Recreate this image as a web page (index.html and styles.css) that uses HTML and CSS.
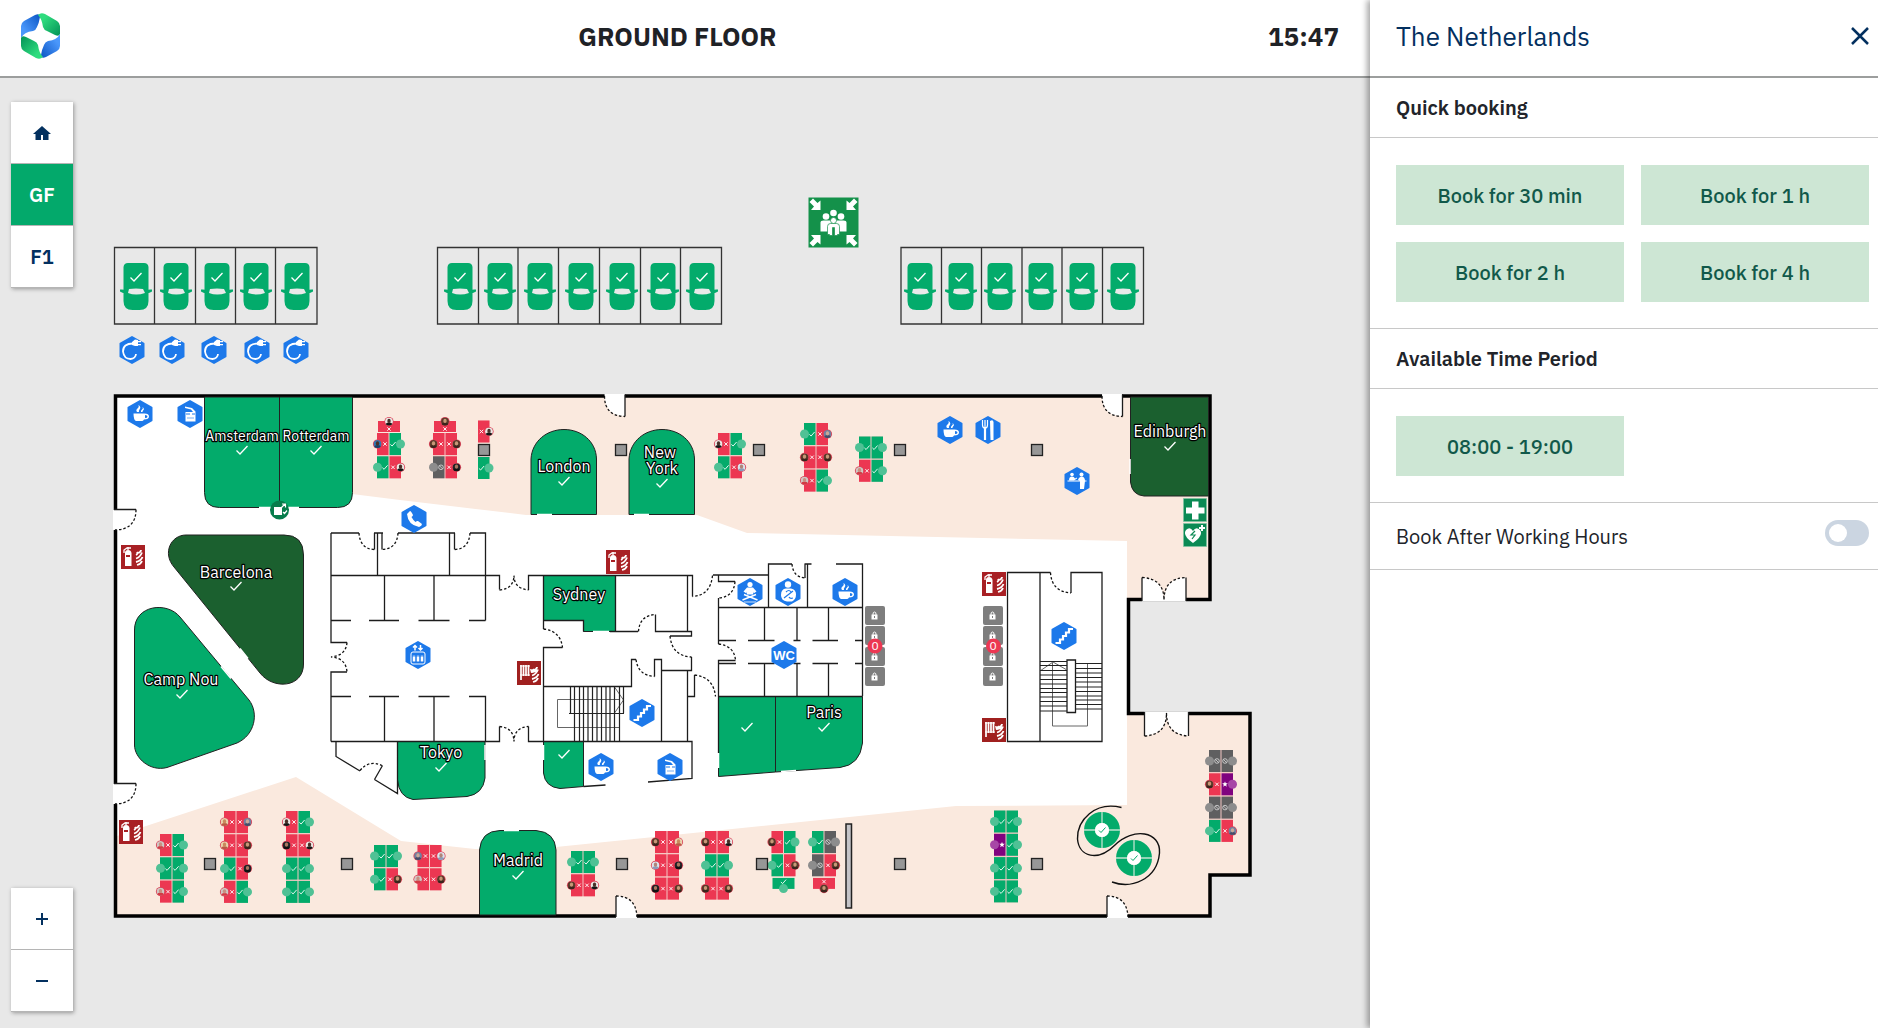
FILE: index.html
```html
<!DOCTYPE html>
<html lang="en">
<head>
<meta charset="utf-8">
<meta name="viewport" content="width=device-width, initial-scale=1">
<title>Ground floor</title>
<link rel="stylesheet" href="styles.css">
</head>
<body>
<div class="app">
<main class="floor">
  <header class="bar">
    <a class="logo" href="#" aria-label="Start">
      <svg viewBox="0 0 50 50" width="50" height="50" aria-hidden="true">
        <defs>
          <linearGradient id="lg" x1="0" y1="0" x2="1" y2="1"><stop offset=".25" stop-color="#2fdc7e"/><stop offset="1" stop-color="#029257"/></linearGradient>
          <linearGradient id="lg2" x1="1" y1="1" x2="0" y2="0"><stop offset=".25" stop-color="#2fdc7e"/><stop offset="1" stop-color="#029257"/></linearGradient>
          <linearGradient id="lb" x1="0" y1="1" x2="1" y2="0"><stop offset=".25" stop-color="#4a97fb"/><stop offset="1" stop-color="#0b55c4"/></linearGradient>
          <linearGradient id="lb2" x1="1" y1="0" x2="0" y2="1"><stop offset=".25" stop-color="#4a97fb"/><stop offset="1" stop-color="#0b55c4"/></linearGradient>
        </defs>
        <path fill="url(#lb)" d="M5 27V15q0-3 3-5l11-6q5-2 5 2-1 6-3 10-1 3-4 4Q8 21 5 27Z"/>
        <path fill="url(#lg)" d="M22 4q3-3 7-1l12 7q3 2 3 5v8q-1 3-5 1l-8-4q-3-1-4-4-1-8-5-12Z"/>
        <path fill="url(#lb2)" d="M44 23v12q0 3-3 5l-11 6q-5 2-5-2 1-6 3-10 1-3 4-4 9-1 12-7Z"/>
        <path fill="url(#lg2)" d="M27 46q-3 3-7 1L8 40q-3-2-3-5v-8q1-3 5-1l8 4q3 1 4 4 1 8 5 12Z"/>
      </svg>
    </a>
    <h1 class="floor-name">GROUND FLOOR</h1>
    <time class="clock">15:47</time>
  </header>

  <div class="canvas">
    <svg class="map" viewBox="0 78 1370 950" role="img" aria-label="Ground floor map">
      <defs>
        <path id="tick" d="M-5.5.5l3.5 3.5 7.500-8" fill="none" stroke="#fff" stroke-width="1.300"/>
        <g id="car">
          <path fill="#03ab6b" d="M-8 0H8q4 0 4.500 4V38q0 9-9 9h-7q-9 0-9-9V4Q-12-0-8 0ZM-16 26.500q4-.5 5 1h22q1-1.500 5-1v2l-4 2h-24l-4-2Z"/>
          <path fill="#e9e9e9" d="M-7 26q7-1 14 0l2 4q-9 3-17 0Z"/>
          <use href="#tick" y="14"/>
        </g>
        <path id="hex" fill="#1d79ea" stroke="#1d79ea" stroke-width="2" stroke-linejoin="round" d="M0-13L11.500-6.500V6.500L0 13-11.500 6.500V-6.500Z"/>
        <g id="charger"><use href="#hex"/><path d="M1-6.500Q-9-6.500-9 1.500q1 7.500 7.500 7.500Q3.500 8.500 4 4" fill="none" stroke="#fff" stroke-width="1.800"/><path fill="#fff" d="M0-8l3-2.500 3 .5v1h3v1.300H6v1.700h3v1.300H6v.7L3-4 0-5Z"/></g>
        <g id="coffee"><use href="#hex"/><path fill="#fff" d="M-6.500-.5h11q4.500 0 4.500 3T4 5.500Q3 7 2 7h-6q-2.500-1-2.500-7.500ZM5 1v3q2.500 0 2.500-1.500T5 1ZM-3-2q-1.500-2 .5-3.500T-1.500-9q3 2 1 4.500-1 1-.5 2.500ZM1-2Q.500-3.500 2-4.500T2.500-7Q5-5 3-3.500 2.500-3 2.500-2Z"/></g>
        <g id="printer"><use href="#hex"/><path fill="#fff" d="M-5-7.500L2-6 5.500-2.500V7.500h-10V-2H3L1-4.500-5-6Z"/><path stroke="#1d79ea" d="M-4 0h4M2 0h3"/><path stroke="#1d79ea" stroke-width=".6" d="M-3 4h7"/></g>
        <g id="stairs"><use href="#hex"/><path fill="none" stroke="#fff" stroke-width="2.200" d="M-8.500 7h4.500V3.500h3V0h3v-3.500h3V-7h4"/></g>
        <g id="flames" fill="none" stroke="#fff" stroke-width="1.800"><path d="M15 10q2-1 1-3M15 13.500q4-1 6-6M15 17q5-1 6.500-5M16 20q4-1 5-4M17 8q3-1 3-3"/></g>
        <g id="extinguisher"><path fill="#a82024" d="M0 0h24v24H0Z"/><path fill="#fff" d="M4 8q0-3 3-3t3.500 3v13H4Z"/><path fill="none" stroke="#fff" stroke-width="1.300" d="M3 8V5l3-2h4M7 5V2"/><path fill="#a82024" d="M5 10h4v2H5Z"/><use href="#flames"/></g>
        <g id="hose"><path fill="#a0201f" d="M0 0h24v24H0Z"/><path stroke="#fff" stroke-width="1.700" d="M4 4v15M6.500 4v11M9 4v11M11.500 4v11"/><path stroke="#fff" d="M3 5h10M3 14h10"/><path fill="#fff" d="M13 8l5 1 2-1v3l-6 1Z"/><use href="#flames" y="1"/></g>
        <g id="locker"><rect width="20" height="19" rx="2" fill="#7e7e7e"/><path fill="#fff" d="M6.500 8.500h6v5h-6Z"/><path fill="none" stroke="#fff" d="M8 9V8q0-2 1.500-2T11 8v1"/><path stroke="#7e7e7e" d="M9.500 10v2"/></g>
        <g id="pillar"><rect x=".5" y=".5" width="11" height="11" fill="#979797" stroke="#222" stroke-width="1.300"/></g>
        <path id="markx" d="M-1.700-1.700l3.400 3.400M1.700-1.700l-3.400 3.400" stroke="#fff" stroke-width=".9"/>
        <path id="markv" d="M-2.600.4l1.700 1.600 3.500-4" fill="none" stroke="#fff" stroke-width=".9"/>
        <g id="markno" fill="none" stroke="#ddd" stroke-width=".8"><circle r="2.300"/><path d="M-1.600-1.600l3.200 3.200"/></g>
        <path id="marks" fill="#fff" d="M0-2.800L.8-1H2.800L1.200.4 1.800 2.400 0 1.200-1.800 2.400-1.200.4-2.800-1H-.8Z"/>
        <clipPath id="face"><circle r="3.900"/></clipPath>
      </defs>

      <!-- parking -->
      <g class="parking">
        <path d="M114.500 247.500H317V324H114.500ZM154.500 248v76M195.500 248v76M235.500 248v76M275.500 248v76"/>
        <path d="M437.500 247.500H721.500V324H437.500ZM478.500 248v76M518 248v76M558.500 248v76M599.500 248v76M640.500 248v76M680.500 248v76"/>
        <path d="M901 247.500H1143.500V324H901ZM941.500 248v76M981.500 248v76M1022 248v76M1062 248v76M1102.500 248v76"/>
      </g>
      <use href="#car" x="136" y="263"/><use href="#car" x="176" y="263"/><use href="#car" x="217" y="263"/><use href="#car" x="256" y="263"/><use href="#car" x="297" y="263"/>
      <use href="#car" x="460" y="263"/><use href="#car" x="500" y="263"/><use href="#car" x="540" y="263"/><use href="#car" x="581" y="263"/><use href="#car" x="622" y="263"/><use href="#car" x="663" y="263"/><use href="#car" x="702" y="263"/>
      <use href="#car" x="920" y="263"/><use href="#car" x="961" y="263"/><use href="#car" x="1000" y="263"/><use href="#car" x="1041" y="263"/><use href="#car" x="1082" y="263"/><use href="#car" x="1123" y="263"/>
      <use href="#charger" x="132" y="350"/><use href="#charger" x="172" y="350"/><use href="#charger" x="214" y="350"/><use href="#charger" x="257" y="350"/><use href="#charger" x="296" y="350"/>

      <!-- assembly point -->
      <g transform="translate(808.500 197.500)">
        <path fill="#14914a" d="M0 0h50v50H0Z"/>
        <g fill="#fff">
          <path id="arrow" d="M1 4.500L4.500 1l4.500 4.500L12 3v9.500H2.500L5.500 9Z"/>
          <use href="#arrow" transform="matrix(-1 0 0 1 50 0)"/><use href="#arrow" transform="matrix(1 0 0 -1 0 50)"/><use href="#arrow" transform="matrix(-1 0 0 -1 50 50)"/>
          <circle cx="25" cy="15.500" r="3.300"/><circle cx="17.500" cy="19" r="3.300"/><circle cx="32.500" cy="19" r="3.300"/>
          <path d="M12 25q0-2 3-2h20q3 0 3 2v9h-2v-8 8h-6V30H20v4h-6v-8 8h-2Z"/>
          <path stroke="#14914a" stroke-width=".7" d="M19 29q0-3 3-3h6q3 0 3 3v8h-2v1h-3v-8h-2v8h-3v-1h-2Z"/><circle cx="25" cy="23" r="3" stroke="#14914a" stroke-width=".7"/>
        </g>
      </g>

      <!-- building shell and carpet -->
      <path fill="#fff" d="M115.500 396H1210V599.500H1128.500V713.500H1250V875H1210V916H115.500Z"/>
      <path class="carpet" d="M352 397H1209V599H1127V541L747 533 697 515H526L400 500 352 494Z"/>
      <path class="carpet" d="M117 836L143 827 296 777 401 841 475 849 556 847 956 806 1127 805V714H1249V874H1209V915H117Z"/>
      <path fill="none" stroke="#000" stroke-width="3.500" d="M115.500 396H1210V599.500H1128.500V713.500H1250V875H1210V916H115.500Z"/>

      <!-- outer doors -->
      <path fill="#fff" d="M113 510h23q0 20-23 20ZM113 784h23q0 20-23 20ZM604.500 394H625v22q-20 0-20.500-22ZM1102 394h20v22q-20 0-20-22ZM1142 601.500V577.500q20 0 22 22 2-22 22-22V601.500ZM1144.500 711.500v24.500q22-2 22-24 0 22 22 24V711.500ZM616 918V896q20 0 21 22ZM1107 918V896q20 0 21 22Z"/>
      <path class="wall" d="M114 509.500h22M114 783.500h22M625 394.500v22M1122.500 394.500v22M1142 577.500V601M1186 577.500V601M1144.500 712v24M1188.500 712v24M616 896v21M1107 896v21"/>
      <path class="swing" d="M136 509.500q0 20-21 20.500M136 783.500q0 20-21 20.500M604.500 396q0 20 20.500 20.500M1102 396q0 20 20.500 20.500M1142 577.500q22 1 22 22.500 0-22 22-22.500M1144.500 736q22-1 22-23 0 22 22 23M616 896q20 0 21 21M1107 896q20 0 21 21"/>

      <!-- bookable rooms -->
      <g class="room">
        <path d="M204.500 397H279.500V507.500H219.500Q204.500 507.500 204.500 492.500Z"/>
        <path d="M279.500 397H352.500V492.500Q352.500 507.500 337.500 507.500H279.500Z"/>
        <path class="far" d="M186 535H284Q303.500 535 303.500 555V664C303.500 688 273 690 260 673L174 567C162 553 171 535 186 535Z"/>
        <path d="M134.500 630C134.500 605 167 601 180 617L249 700C259 713 255 735 237 743L167 767.500C150 772 134.500 758 134.500 745Z"/>
        <path d="M397.500 741.500H485V778Q483 794 467 796.500L413 799.500Q399 797 397.500 780Z"/>
        <path d="M543.500 741.500H583.500V786.500L560 788.500Q545 787 543.500 773Z"/>
        <path d="M531 514.500V459C532 441 547 429.500 564 429.500S596 441 596.500 459V514.500Z"/>
        <path d="M629 514.500V459C630 441 645 429.500 662 429.500S694 441 694.500 459V514.500Z"/>
        <path d="M479.500 915V850Q481 831 500 830.500H536Q555 832 556 850V915Z"/>
        <path d="M543.500 575.500H615.500V631.500H583.500V620.500H543.500Z"/>
        <path d="M718.500 696.500H775.500V772L718.500 776.500Z"/>
        <path d="M775.500 696.500H862.500V743Q860 765 840 767.500L775.500 772Z"/>
        <path class="far" d="M1130.500 397H1208.500V496H1144Q1132 495 1130.500 482Z"/>
      </g>
      <path stroke="#fff" stroke-width="1.500" d="M259 507.500h40M240 648.500l8 10M221 666.500l10 12M537 514.500h15M634 514.500h15M504 830.500h15M593 631.500h16M485 745v15M543.500 745v15M781 771.500l15-1M718.500 753v15M1130 459v15"/>

      <!-- inner walls -->
      <path class="wall" d="M331 533h28M374 533h9M398 533h57M470 533h15.500v87.500M331 533V642.500h16M347 672h-16v69.500M377.500 533v42M449.500 533v42M374.500 533v16.500M382 533v16.500M454.500 533v16.500M331 575.500H499.500v14M528.500 590v-14.500H692.500v21M331 620.500h20M369 620.500h30M418.500 620.500h31M469 620.500h16.500M384.500 575.500v45M434 575.500v45M331 696.500h20M369 696.500h30M418.500 696.500h31M469 696.500h16.500v45M384.500 696.500v45M434 696.500v45M331 741.500H499.500v-15M528.500 726.500v15H692V778.500L648 782M583.500 786.500l22-1.500
        M543.500 575.500V629M562.500 647.500h-19V741.500M543.500 620.500h40v11M615.500 575.500v56M610 631.500h28M655.500 614.500v17h36v4.500H670M687.500 575.500v56M691.500 657v13.500h-30M687.500 670.500v71M661.500 741.500v-82h-7v17M636 659.500h-4.500v27h-88M687.500 696.500h7v-21.500
        M336 742v14.500l24 14.500M374.500 779.500l23 14v-52M374.500 779.500l8-14"/>
      <path class="wall" d="M713 575H768.500M718.500 575v6.500H735M718.500 598v46M735.500 660.500h-17V753M718.500 607.500H862.500M768.500 607.500V564H792M804.500 564h7M836 564h26.500v132M805 564v14M807.500 564v43.500M718.500 640.500H736M748 640.500h26.500M793.500 640.500h7M812.500 640.500H838M855 640.500h7.500M718.500 663.500H736M748 663.500h26.500M793.500 663.500h7M812.500 663.500H838M855 663.500h7.500M764.500 607.500v33M797 607.500v33M828.500 607.500v33M764.500 663.500v33M797 663.500v33M828.500 663.500v33M718.500 696.500H862.500"/>
      <path class="wall" d="M1050.500 572.500H1007.500V741.500H1102V572.500H1071V593M1040 572.500v169M1067 660h8.500v52.500H1067Z"/>
      <path class="swing" d="M359 533q1 16 15.500 16.500M398 533q-1 16-16 16.500M470 533q-1 16-15.500 16.500M347 642.500q-1 13-16 14.500 15 1 16 15M499.500 590q14-1 14.500-14.500 0 13 14.500 14.500M499.500 726.500q14 1 14.500 15 0-14 14.500-15M712.500 575.500q-2 20-20 21M543.500 629q17 2 19 18.500M638.500 631.500q1-16 17-17M670 636q2 20 21.500 21M636 659.500q2 16 18.500 17M694.500 675q19 2 21 21.500M735 581.500q-1 15-16 16.500M718.500 644q16 2 17 16.500M792 564q1 13 13 14M1050.500 572.500q1 19 20.500 20.500M360 770.500q9-11 22-5"/>

      <!-- stair flights -->
      <path class="thin" d="M619 699.500H557.500v28H619M614.500 687l9 13-9 13M1052.500 663v63h35v-63M1040 671l13-9 14 8"/>
      <path class="step" d="M570.500 687v26M574.500 687v54M579.500 687v54M583.500 687v54M588 687v54M592.500 687v54M597 687v54M601.500 687v54M606 687v54M610 687v54M614.500 687v54M619.500 687v54M623.500 687v26M569 713.500h55"/>
      <path class="step" d="M1040 661.500h27M1040 665.500h27M1040 670.500h27M1040 675h27M1040 679.500h27M1040 684h27M1040 688.500h27M1040 692.500h27M1040 697h27M1040 701.500h27M1040 706h27M1040 711h27M1075.500 663.500H1102M1075.500 668.500H1102M1075.500 673H1102M1075.500 677.500H1102M1075.500 682H1102M1075.500 687H1102M1075.500 691.500H1102M1075.500 696H1102M1075.500 700H1102M1075.500 704.500H1102M1075.500 709H1102"/>

      <!-- desks are filled in from desks.js -->
      <g id="desks"></g>

      <!-- pillars -->
      <use href="#pillar" x="478" y="444"/><use href="#pillar" x="615" y="444"/><use href="#pillar" x="753" y="444"/><use href="#pillar" x="894" y="444"/><use href="#pillar" x="1031" y="444"/>
      <use href="#pillar" x="204" y="858"/><use href="#pillar" x="341" y="858"/><use href="#pillar" x="616" y="858"/><use href="#pillar" x="756" y="858"/><use href="#pillar" x="894" y="858"/><use href="#pillar" x="1031" y="858"/>
      <rect x="846" y="824" width="5.500" height="84" fill="#c4c4c8" stroke="#222" stroke-width="1.500"/>

      <!-- round tables -->
      <g id="table"><circle cx="1102" cy="830" r="12.500" fill="none" stroke="#03ab6b" stroke-width="11"/><circle cx="1102" cy="830" r="7" fill="#fff"/><path stroke="#bfe3cf" stroke-width="1.300" d="M1102 812v11M1102 837v11M1084 830h11M1109 830h11"/><path fill="none" stroke="#03ab6b" d="M1099 830.500l2 2 4.500-5"/></g>
      <use href="#table" x="32" y="28"/>
      <path fill="none" stroke="#111" stroke-width="1.400" d="M1121.500 807.500C1095 801 1077 820 1077.500 839 1079 857 1098 862 1115 845 1133 827 1161 831 1159.500 853 1157 880 1131 889 1112 882"/>

      <!-- lockers -->
      <use href="#locker" x="865" y="606"/><use href="#locker" x="865" y="626"/><use href="#locker" x="865" y="647"/><use href="#locker" x="865" y="667"/>
      <use href="#locker" x="983" y="606"/><use href="#locker" x="983" y="626"/><use href="#locker" x="983" y="647"/><use href="#locker" x="983" y="667"/>
      <circle cx="875" cy="646" r="7.500" fill="#ec3752"/><circle cx="993.500" cy="646" r="7.500" fill="#ec3752"/>
      <text class="count" x="875" y="650">0</text><text class="count" x="993" y="650">0</text>

      <!-- safety signs -->
      <use href="#extinguisher" x="121" y="545"/><use href="#extinguisher" x="119" y="820"/><use href="#extinguisher" x="606" y="550"/><use href="#extinguisher" x="982" y="572"/>
      <use href="#hose" x="517" y="661"/><use href="#hose" x="982" y="718"/>
      <path fill="#0b8a54" stroke="#7fc4a4" stroke-width=".7" d="M1183.500 498.500h23v23h-23ZM1183.500 523.500h23v23h-23Z"/>
      <path fill="#fff" d="M1192 501.500h6.500v6h6v6h-6v6H1192v-6h-6v-6h6ZM1193 543q-11-8-7-13 4-4 7 1 3-5 7-1 4 5-7 13ZM1201 525h2v2h2v2h-2v2h-2v-2h-2v-2h2Z"/>
      <path fill="none" stroke="#0b8a54" stroke-width="1.200" d="M1195 531l-4 4h4l-3 4"/>
      <circle cx="279.500" cy="510" r="9.500" fill="#067c4b"/><path fill="#fff" d="M274 507h8v8h-8Z"/><path fill="none" stroke="#fff" stroke-width="1.200" d="M281 508l4-4M282 504h3.500v3.500M283 512l1.500 1.500 2.500-3"/>

      <!-- facilities -->
      <use href="#coffee" x="140" y="414"/><use href="#coffee" x="950" y="430"/><use href="#coffee" x="845" y="592"/><use href="#coffee" x="601" y="767"/>
      <use href="#printer" x="190" y="414"/><use href="#printer" x="670" y="767"/>
      <use href="#stairs" x="642" y="713"/><use href="#stairs" x="1064" y="636"/>
      <g transform="translate(414 519)"><use href="#hex"/><path fill="#fff" d="M-7-5l3-3q1 0 3 4 0 1-1.500 2Q-1 1 1.500 3 3 1.500 4 2l4 3q0 2-3 3Q-6 6-7-5Z"/></g>
      <g transform="translate(418 655)"><use href="#hex"/><g fill="none" stroke="#fff"><rect x="-7" y="-3" width="14" height="12" rx="2"/><path stroke-width="1.500" d="M-3-4.500v-5M-5-7.500l2-2 2 2M2.500-10v5M.500-7l2 2 2-2"/><path stroke-width="2.500" d="M-4 .5v6M0 .5v6M4 .5v6"/></g><path stroke="#1d79ea" stroke-width=".8" d="M-6 1h12"/></g>
      <g transform="translate(988 430)"><use href="#hex"/><path stroke="#fff" stroke-width="2.200" d="M-3-2v12"/><path fill="none" stroke="#fff" stroke-width="1.200" d="M-5.500-10v5q0 3 2.500 3t2.500-3v-5M-3-10v8"/><path fill="#fff" d="M2-9q3-2 3.500 1V10H2.500Z"/></g>
      <g transform="translate(1077 481)"><use href="#hex"/><path stroke="#fff" stroke-width="1" d="M-9.500 0H9.500"/><g fill="#fff"><circle cx="-5" cy="-6.500" r="1.800"/><circle cx="4.500" cy="-6.500" r="2"/><path d="M-8-.5q0-4 3-4 2 0 3 2l2-1v1l-3 2ZM1-1Q2-4.500 5-4.500 8-4 8 0L7 8H3V0Z"/></g></g>
      <g transform="translate(750 592)"><use href="#hex"/><g fill="#fff"><circle cy="-7.500" r="2.600"/><path d="M-3-4.500h6l3.500 4-3 2-.5-2v3h-6v-3l-.5 2-3-2Z"/></g><path fill="none" stroke="#fff" stroke-width="1.500" d="M-7.500 8L6 2.500M7.500 8L-6 2.500"/><path stroke="#fff" stroke-width=".8" d="M-6 10H6"/></g>
      <g transform="translate(788 592)"><use href="#hex"/><g fill="#fff"><circle cx="0" cy="-7.500" r="3.200"/><path d="M-7 3q0-6 5-6.500h5q5 1 5 6t-4 7h-5q-6-1-6-6.500Z"/></g><path fill="none" stroke="#1d79ea" stroke-width="1.200" d="M-4 6L5-1M-2 0q3-3 5 0M1 5q1 2 4 1"/></g>
      <use href="#hex" x="784" y="655"/><text class="wc" x="784" y="660">WC</text>

      <!-- room names -->
      <g class="names">
        <text class="tight" x="242" y="441">Amsterdam</text><text class="tight" x="316" y="441">Rotterdam</text>
        <text x="236" y="578">Barcelona</text><text x="181" y="685">Camp Nou</text><text x="564" y="472">London</text>
        <text x="660" y="458">New</text><text x="662" y="474">York</text><text x="441" y="758">Tokyo</text>
        <text x="579" y="600">Sydney</text><text x="824" y="718">Paris</text><text x="518" y="866">Madrid</text><text x="1170" y="437">Edinburgh</text>
      </g>
      <use href="#tick" x="242" y="450"/><use href="#tick" x="316" y="450"/><use href="#tick" x="236" y="586"/><use href="#tick" x="182" y="694"/><use href="#tick" x="564" y="481"/><use href="#tick" x="662" y="483"/><use href="#tick" x="441" y="767"/><use href="#tick" x="564" y="754"/><use href="#tick" x="747" y="727"/><use href="#tick" x="824" y="727"/><use href="#tick" x="518" y="875"/><use href="#tick" x="1170" y="446"/>
    </svg>

    <nav class="stack levels" aria-label="Floors">
      <button type="button" aria-label="Home"><svg viewBox="0 0 18 16" width="18" height="16" aria-hidden="true"><path fill="#03305f" d="M9 1L0 9h2.500v6H8v-5h2v5h5.500V9H18Z"/></svg></button>
      <button type="button" class="on">GF</button>
      <button type="button">F1</button>
    </nav>
    <div class="stack zoom">
      <button type="button" aria-label="Zoom in"><svg viewBox="0 0 12 12" width="12" height="12"><path stroke="#03305f" stroke-width="2" d="M6 0v12M0 6h12"/></svg></button>
      <button type="button" aria-label="Zoom out"><svg viewBox="0 0 12 12" width="12" height="12"><path stroke="#03305f" stroke-width="2" d="M0 6h12"/></svg></button>
    </div>
  </div>
</main>

<aside class="panel">
  <header class="panel-head">
    <h2>The Netherlands</h2>
    <button type="button" class="close" aria-label="Close"><svg viewBox="0 0 18 18" width="18" height="18"><path stroke="#03305f" stroke-width="2.500" d="M1 1l16 16M17 1L1 17"/></svg></button>
  </header>
  <h3 class="row">Quick booking</h3>
  <div class="slots">
    <button type="button">Book for 30 min</button>
    <button type="button">Book for 1 h</button>
    <button type="button">Book for 2 h</button>
    <button type="button">Book for 4 h</button>
  </div>
  <h3 class="row">Available Time Period</h3>
  <div class="slots">
    <button type="button">08:00 - 19:00</button>
  </div>
  <label class="row after">Book After Working Hours <input type="checkbox" class="switch"></label>
</aside>
</div>
<script src="desks.js"></script>
</body>
</html>
```
FILE: styles.css
```css
* { box-sizing: border-box; }
body {
  margin: 0;
  font-family: "IBM Plex Sans", "Noto Sans", sans-serif;
  color: #21242a;
  background: #e8e8e8;
}
h1, h2, h3 { margin: 0; }
button { font: inherit; border: 0; padding: 0; cursor: pointer; }

.app { display: grid; grid-template-columns: minmax(0, 1fr) 508px; min-height: 100vh; }
.floor { display: flex; flex-direction: column; }

.bar {
  display: grid;
  grid-template-columns: 1fr auto 1fr;
  align-items: center;
  height: 78px;
  padding: 0 31px 4px 16px;
  background: #fff;
  border-bottom: 2px solid #9c9e9d;
}
.logo { display: block; height: 50px; justify-self: start; }
.floor-name, .clock { font-size: 26px; font-weight: 700; line-height: 32px; color: #1f2226; }
.clock { justify-self: end; }

.canvas { position: relative; flex: 1; }
.map { display: block; width: 100%; height: auto; }

.stack { position: absolute; left: 11px; display: flex; flex-direction: column; width: 62px; box-shadow: 1px 1px 4px rgba(0, 0, 0, .35); }
.stack button { display: flex; align-items: center; justify-content: center; height: 62px; border-bottom: 1px solid #b5b5b5; background: #fff; color: #03305f; font-size: 20px; font-weight: 600; }
.stack .on { background: #03a96b; color: #fff; }
.levels { top: 24px; }
.zoom { bottom: 16px; }

.parking path { fill: none; stroke: #333; stroke-width: 1.3; }
.carpet { fill: #fae9de; }
.room path { fill: #03ab6b; stroke: #222; stroke-width: 1; }
.room .far { fill: #1b602f; }
.wall { fill: none; stroke: #1c1c1c; stroke-width: 1.3; }
.swing { fill: none; stroke: #111; stroke-width: 1.3; stroke-dasharray: 2.5 2; }
.thin { fill: none; stroke: #666; stroke-width: 1; }
.step { fill: none; stroke: #222; stroke-width: 1.2; }
.names text { font-size: 16px; text-anchor: middle; fill: #fff; stroke: #000; stroke-width: 2.4px; stroke-linejoin: round; paint-order: stroke; }
.names .tight { font-size: 14px; }
.count { font-size: 12px; text-anchor: middle; fill: #fff; }
.wc { font: bold 13px "Liberation Sans", sans-serif; text-anchor: middle; fill: #fff; }

.panel { position: relative; background: #fff; box-shadow: -3px 0 6px rgba(0, 0, 0, .35); }
.panel-head { display: flex; align-items: center; justify-content: space-between; height: 78px; padding: 0 9px 4px 26px; border-bottom: 2px solid #9c9e9d; }
.panel-head h2 { font-size: 26px; line-height: 32px; font-weight: 400; color: #03305f; }
.close { display: flex; background: none; }
.row { display: flex; align-items: center; height: 60px; padding: 0 9px 0 26px; border-bottom: 1px solid #c8c8c8; font-size: 20px; font-weight: 600; }
.slots { display: grid; grid-template-columns: 1fr 1fr; gap: 17px; padding: 27px 9px 26px 26px; border-bottom: 1px solid #c8c8c8; }
.slots button { height: 60px; background: #cde6d4; color: #11594a; font-size: 20px; font-weight: 500; }
.after { justify-content: space-between; height: 67px; font-weight: 400; }

.switch { appearance: none; width: 44px; height: 26px; margin: 0 0 6px; padding: 4px; border-radius: 13px; background: #cbd5e1; }
.switch::before { content: ""; display: block; width: 18px; height: 18px; border-radius: 50%; background: #fff; }
.switch:checked { background: #03a96b; }
.switch:checked::before { margin-left: auto; }
```
FILE: desks.js
```js
// Desk blocks: [left, top, rows, head desk, foot desk].
// A desk is g (free), d (disabled), p (reserved), a digit (taken, avatar index) or "." (none).
const blocks = [
  [377, 433, ["6g", "g0"], "0"],
  [433, 433, ["11", "d2"], "1"],
  [465.5, 420.5, [".0"]],
  [465.5, 457, [".g"]],
  [718, 433, ["0g", "g7"]],
  [804, 423, ["g5", "11", "3g"]],
  [859, 436.5, ["gg", "3g"]],
  [160, 834, ["3g", "gg", "3g"]],
  [224, 811, ["45", "41", "g2", "3g"]],
  [286, 811, ["0g", "20", "gg", "gg"]],
  [374, 845, ["gg", "g1"]],
  [417.5, 845, ["57", "31"]],
  [571, 851, ["gg", "10"]],
  [655, 831, ["14", "72", "21"]],
  [705, 831, ["10", "gg", "11"]],
  [771.5, 831, ["1g", "g1"], null, "g"],
  [812, 831, ["gd", "d1"], null, "1"],
  [994, 810.5, ["gg", "pg", "gg", "gg"]],
  [1209, 750, ["dd", "1p", "dd", "g5"]]
];
const avatars = [
  ["#ece6e4", "#4a3028", "#151515"], ["#5b3a2a", "#c79877", "#3a241c"],
  ["#222226", "#a87860", "#101010"], ["#d0c6c4", "#c98f80", "#d23a44"],
  ["#ead2ac", "#c98a5c", "#b85a44"], ["#7280a0", "#c8a898", "#444c68"],
  ["#3474ae", "#4a3028", "#1b3f66"], ["#dde2ec", "#b08478", "#8c9ab8"]
];
const kinds = {
  g: ["#03ab6b", "#4fc195", "markv"],
  d: ["#5f5f60", "#8d8d8d", "markno"],
  p: ["#80037f", "#a747a6", "marks"],
  taken: ["#ec3752", null, "markx"]
};

function desk(code, x, y, w, h, cx, cy, mx, my) {
  const [fill, seat, mark] = kinds[code] || kinds.taken;
  let s = `<rect x="${x}" y="${y}" width="${w}" height="${h}" fill="${fill}"/>` +
          `<use href="#${mark}" x="${mx}" y="${my}"/>`;
  if (seat) {
    s += `<circle cx="${cx}" cy="${cy}" r="4.500" fill="${seat}"/>`;
  } else {
    const [bg, head, body] = avatars[code];
    s += `<g transform="translate(${cx} ${cy})"><circle r="4.600" fill="#d9455a"/>` +
         `<g clip-path="url(#face)"><circle r="4" fill="${bg}"/><ellipse cy="3.800" rx="3.500" ry="2.800" fill="${body}"/>` +
         `<ellipse cy="-.6" rx="1.700" ry="2.100" fill="${head}"/></g></g>`;
  }
  return s;
}

let out = "";
for (const [x, y, rows, head, foot] of blocks) {
  const single = rows[0][0] === ".";
  const h = rows.length * 23.3;
  out += `<rect x="${single ? x + 12.5 : x}" y="${y}" width="${single ? 11.5 : 24}" height="${h - 1.300}" fill="#f5c9c4"/>`;
  if (head) out += desk(head, x + 1, y - 12, 22, 11, x + 12, y - 11.5, x + 12, y - 4);
  rows.forEach((row, i) => {
    const t = y + i * 23.3;
    if (row[0] !== ".") out += desk(row[0], x, t, 11.5, 22, x + 0.5, t + 11, x + 8, t + 11);
    out += desk(row[1], x + 12.5, t, 11.5, 22, x + 23.5, t + 11, x + 16, t + 11);
  });
  if (foot) out += desk(foot, x + 1, y + h + 0.3, 22, 11, x + 12, y + h + 11, x + 12, y + h + 4);
}
document.getElementById("desks").innerHTML = out;
```
